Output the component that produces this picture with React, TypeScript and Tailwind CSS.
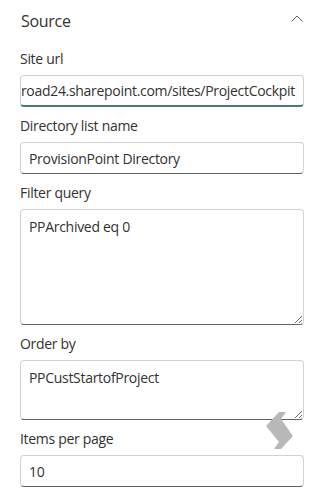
import { ReactNode } from 'react';

const font = { fontFamily: '"Segoe UI", "Open Sans", "Noto Sans", sans-serif' };

function Field({ label, children }: { label: string; children: ReactNode }) {
  return (
    <div className="mt-[9px] first:mt-0">
      <div className="h-[20px] text-[14px] leading-[20px] tracking-[-0.3px] text-[#323130]">{label}</div>
      <div className="mt-[6px]">{children}</div>
    </div>
  );
}

const boxBase =
  'w-full rounded-[4px] border border-[#d1d1d1] border-b-[#616161] bg-white text-[14px] leading-[20px] tracking-[-0.3px] text-[#323130] outline-none';

export default function App() {
  return (
    <div className="relative w-[324px] h-[495px] overflow-hidden bg-white" style={font}>
      {/* Group header */}
      <div className="flex h-[42px] items-center justify-between pl-[21px] pr-[21px]">
        <span className="text-[16px] tracking-[-0.3px] text-[#323130]">Source</span>
        <svg width="12" height="7" viewBox="0 0 12 7" fill="none" className="-mt-[6px]">
          <path d="M0.5 6.5 L6 1 L11.5 6.5" stroke="#605e5c" strokeWidth="1" />
        </svg>
      </div>

      {/* Fields */}
      <div className="mt-[7px] px-[20px]">
        <Field label="Site url">
          <div className="flex h-[32px] w-full items-center justify-end overflow-hidden whitespace-nowrap rounded-[4px] border border-[#d1d1d1] border-b-2 border-b-[#477a79] bg-white px-[8px] text-[14px] tracking-[-0.3px] text-[#323130]">
            road24.sharepoint.com/sites/ProjectCockpit
          </div>
        </Field>
        <Field label="Directory list name">
          <input readOnly value="ProvisionPoint Directory" className={`${boxBase} h-[32px] px-[8px]`} />
        </Field>
        <Field label="Filter query">
          <textarea readOnly value="PPArchived eq 0" className={`${boxBase} block h-[116px] resize-y px-[8px] pt-[7px]`} />
        </Field>
        <Field label="Order by">
          <textarea readOnly value="PPCustStartofProject" className={`${boxBase} block h-[60px] resize-y px-[8px] pt-[7px]`} />
        </Field>
        <Field label="Items per page">
          <input readOnly value="10" className={`${boxBase} h-[32px] px-[8px]`} />
        </Field>
      </div>

      {/* Floating chevron mark */}
      <svg
        className="absolute left-[266px] top-[412px]"
        width="27"
        height="37"
        viewBox="266 412 27 37"
      >
        <polygon
          points="279,412 286,412 281,419 293,436 281,449 274,449 279,442 266,426"
          fill="#b8b8b8"
        />
      </svg>
    </div>
  );
}
